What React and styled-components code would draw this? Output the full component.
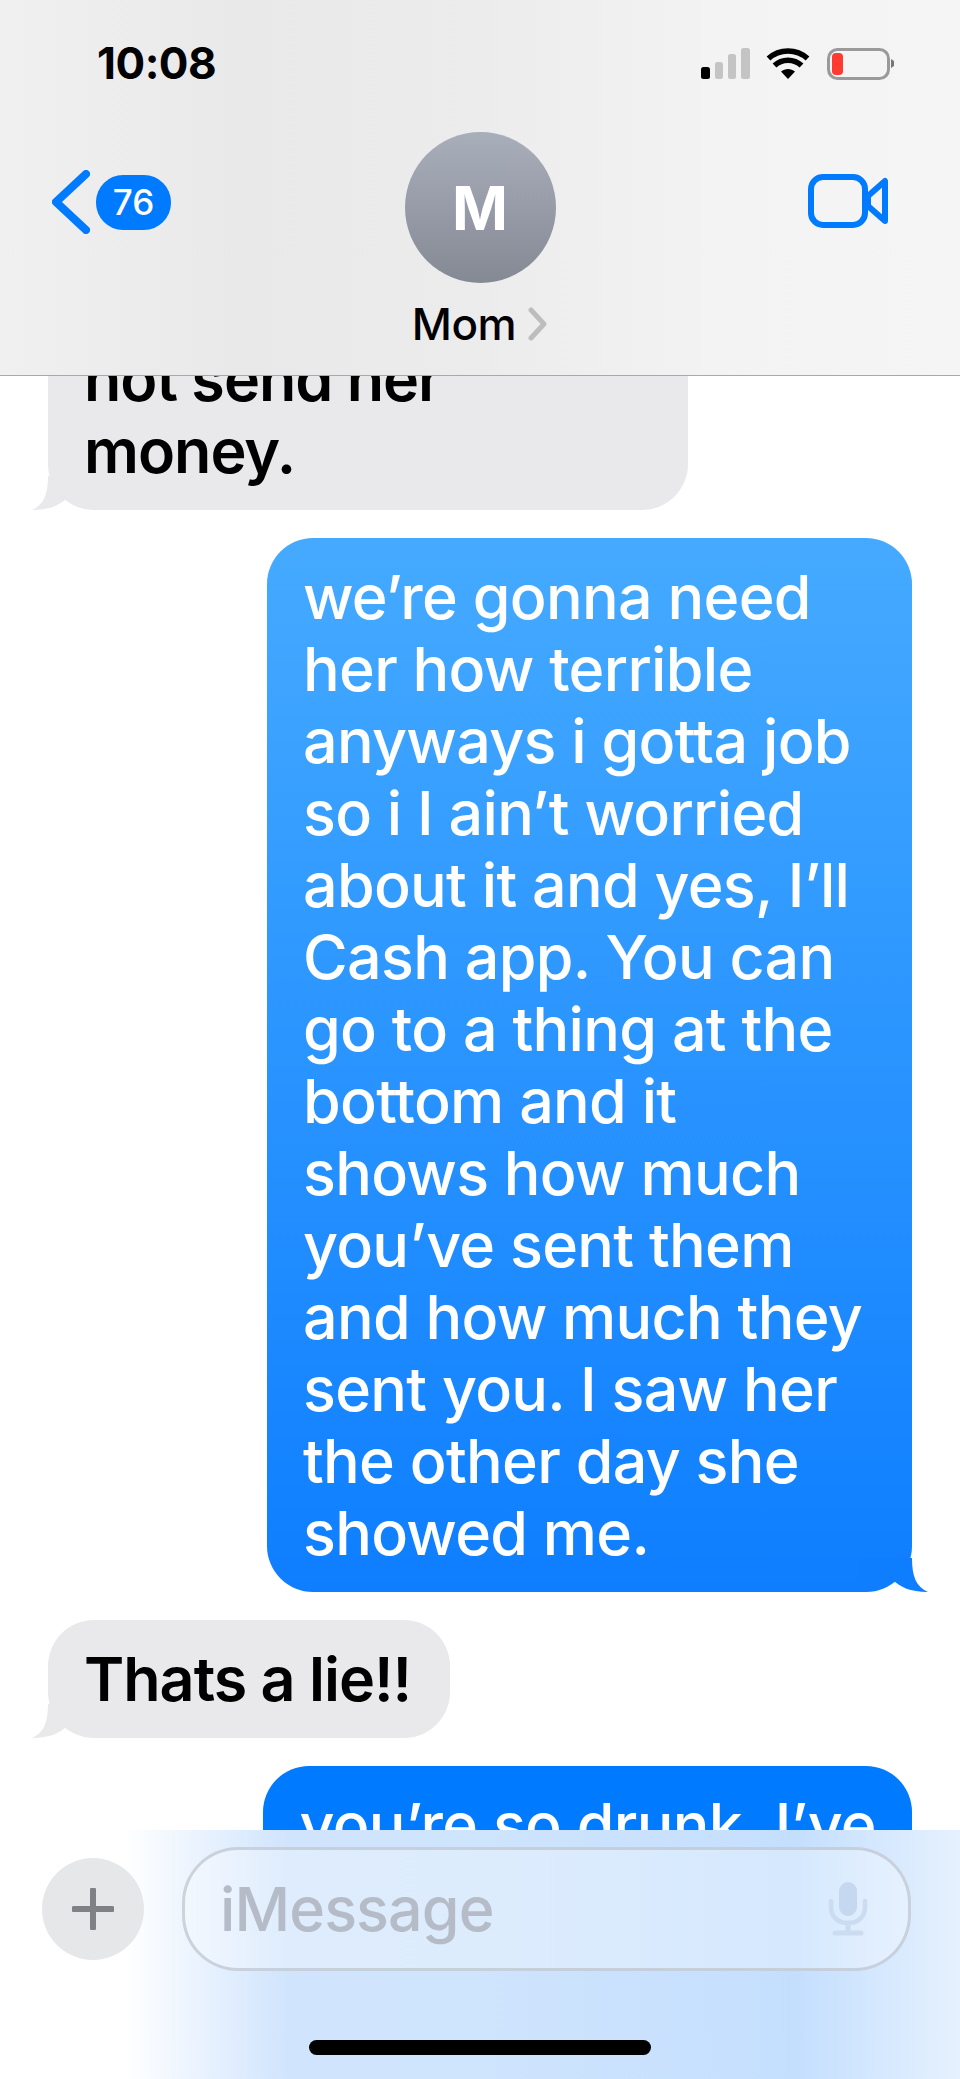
import React from 'react'
import styled, { createGlobalStyle } from 'styled-components'

const GlobalStyle = createGlobalStyle`
  html, body {
    margin: 0;
    padding: 0;
    background: #fff;
  }
  * {
    box-sizing: border-box;
  }
`

const Screen = styled.div`
  position: relative;
  width: 960px;
  height: 2079px;
  overflow: hidden;
  background: #fff;
  font-family: Inter, "Liberation Sans", sans-serif;
`

// Header
const Header = styled.header`
  position: absolute;
  top: 0;
  left: 0;
  right: 0;
  z-index: 2;
  height: 376px;
  padding: 0 52px;
  background: linear-gradient(90deg, #f0f0f0 0%, #e9e9e9 25%, #ececec 50%, #f3f3f3 75%, #f5f5f5 100%);
  border-bottom: 1px solid #a9a9a9;
`

const StatusBar = styled.div`
  display: flex;
  align-items: flex-start;
  justify-content: space-between;
  height: 132px;
  padding-top: 48px;
  padding-right: 12px;
`

const Time = styled.div`
  margin-left: 45px;
  font-size: 44px;
  line-height: 31px;
  font-weight: 700;
  letter-spacing: -0.5px;
  color: #000;
`

const StatusIcons = styled.svg`
  display: block;
`

const NavRow = styled.div`
  display: grid;
  grid-template-columns: 1fr auto 1fr;
  align-items: start;
`

const BackGroup = styled.div`
  display: flex;
  align-items: center;
  gap: 6px;
  padding-top: 38px;
`

const Badge = styled.div`
  width: 75px;
  height: 55px;
  display: flex;
  align-items: center;
  justify-content: center;
  border-radius: 27px;
  background: #007aff;
  color: #fff;
  font-size: 35px;
  font-weight: 500;
`

const Contact = styled.div`
  display: flex;
  flex-direction: column;
  align-items: center;
`

const Avatar = styled.div`
  width: 151px;
  height: 151px;
  display: flex;
  align-items: center;
  justify-content: center;
  border-radius: 50%;
  background: linear-gradient(180deg, #a9aebb 0%, #858994 100%);
  color: #fff;
  font-size: 60px;
  font-weight: 700;
`

const ContactName = styled.div`
  display: flex;
  align-items: center;
  gap: 12px;
  margin-top: 16px;
  font-size: 44px;
  line-height: 50px;
  font-weight: 500;
  letter-spacing: -0.4px;
  color: #000;
`

const VideoButton = styled.div`
  display: flex;
  justify-content: flex-end;
  padding: 42px 19px 0 0;
`

// Messages
const Thread = styled.main`
  display: flex;
  flex-direction: column;
  gap: 28px;
  padding: 320px 48px 0;
`

const Bubble = styled.div`
  position: relative;
  align-self: ${(p) => (p.$sent ? 'flex-end' : 'flex-start')};
  width: ${(p) => p.$width || 'fit-content'};
  padding: 23px 36px;
  border-radius: 46px;
  background: ${(p) => p.$fill};
  color: ${(p) => (p.$sent ? '#fff' : '#000')};
  font-size: 61px;
  line-height: 72px;
  font-weight: ${(p) => (p.$sent ? 500 : 600)};
  letter-spacing: ${(p) => (p.$sent ? '-0.7px' : '-1px')};
  white-space: nowrap;
`

const Line = styled.div``

const Tail = styled.svg`
  position: absolute;
  bottom: 0;
  ${(p) => (p.$sent ? 'right: -16px;' : 'left: -16px;')}
`

// Composer
const Composer = styled.footer`
  position: absolute;
  left: 0;
  right: 0;
  bottom: 0;
  z-index: 2;
  height: 249px;
  padding: 17px 49px 0 42px;
  background:
    linear-gradient(90deg, #fff 0%, #fff 13%, rgba(255, 255, 255, 0) 30%),
    linear-gradient(90deg, #d2e5fd 0%, #cfe4fd 50%, #c4dffe 83%, #e6f1fe 100%);
`

const ComposerRow = styled.div`
  display: flex;
  align-items: center;
  gap: 38px;
`

const PlusButton = styled.div`
  width: 102px;
  height: 102px;
  flex-shrink: 0;
  display: flex;
  align-items: center;
  justify-content: center;
  border-radius: 50%;
  background: #e6e7e9;
`

const InputField = styled.div`
  flex: 1;
  height: 124px;
  display: flex;
  align-items: center;
  justify-content: space-between;
  padding: 0 40px 0 35px;
  border-radius: 56px;
  border: 3px solid rgba(190, 197, 208, 0.75);
  background: rgba(255, 255, 255, 0.3);
`

const Placeholder = styled.div`
  font-size: 61px;
  font-weight: 500;
  letter-spacing: -0.9px;
  color: #b5bcc8;
`

const HomeBar = styled.div`
  width: 342px;
  height: 15px;
  margin: 69px auto 0 267px;
  border-radius: 8px;
  background: #000;
`

const Chevron = ({ width, height, path, color, stroke }) => (
  <svg width={width} height={height} viewBox={`0 0 ${width} ${height}`} fill="none">
    <path d={path} stroke={color} strokeWidth={stroke} strokeLinecap="round" strokeLinejoin="round" />
  </svg>
)

const ReceivedTail = () => (
  <Tail $sent={false} width="70" height="34" viewBox="0 0 70 34">
    <path d="M16 0 C16 18 12 29 0 34 C18 34 28 29 35 22 C42 29 54 34 70 34 L70 0 Z" fill="#e9e9eb" />
  </Tail>
)

const StatusGlyphs = () => (
  <StatusIcons width="195" height="33" viewBox="0 0 195 33">
    <rect x="0" y="19" width="9" height="12" rx="2.5" fill="#000" />
    <rect x="14" y="14" width="8" height="17" rx="2.5" fill="#c4c4c4" />
    <rect x="27" y="6" width="8" height="25" rx="2.5" fill="#c4c4c4" />
    <rect x="40" y="0" width="9" height="31" rx="2.5" fill="#c4c4c4" />
    <path d="M87 31 L80 23.5 C84 20 90 20 94 23.5 Z" fill="#000" />
    <path d="M73.5 17.5 C81 10.5 93 10.5 100.5 17.5" stroke="#000" strokeWidth="5.6" fill="none" />
    <path d="M67.5 10.5 C78.5 .5 95.5 .5 106.5 10.5" stroke="#000" strokeWidth="5.6" fill="none" />
    <rect x="127.5" y="1.5" width="60" height="29" rx="9" fill="none" stroke="#9a9a9a" strokeWidth="3" />
    <rect x="131" y="5" width="11" height="22" rx="4" fill="#ff3b30" />
    <path d="M190 11 L193 13 V18 L190 20 Z" fill="#777" />
  </StatusIcons>
)

const App = () => (
  <Screen>
    <GlobalStyle />
    <Header>
      <StatusBar>
        <Time>10:08</Time>
        <StatusGlyphs />
      </StatusBar>
      <NavRow>
        <BackGroup>
          <Chevron width="38" height="64" path="M34 4 L4 32 L34 60" color="#007aff" stroke="8" />
          <Badge>76</Badge>
        </BackGroup>
        <Contact>
          <Avatar>M</Avatar>
          <ContactName>
            Mom
            <Chevron width="20" height="34" path="M3 3 L16 17 L3 31" color="#bdbdbd" stroke="5" />
          </ContactName>
        </Contact>
        <VideoButton>
          <svg width="81" height="55" viewBox="0 0 81 55" fill="none">
            <rect x="3" y="3" width="54" height="48" rx="12" stroke="#007aff" strokeWidth="6" />
            <path d="M60 22 L77 7 V47 L60 32 Z" stroke="#007aff" strokeWidth="6" strokeLinejoin="round" />
          </svg>
        </VideoButton>
      </NavRow>
    </Header>

    <Thread>
      <Bubble $width="640px" $fill="#e9e9eb">
        <Line>not send her</Line>
        <Line>money.</Line>
        <ReceivedTail />
      </Bubble>

      <Bubble $sent $width="645px" $fill="linear-gradient(180deg, #45aaff 0%, #0e7eff 100%)">
        <Line>we’re gonna need</Line>
        <Line>her how terrible</Line>
        <Line>anyways i gotta job</Line>
        <Line>so i I ain’t worried</Line>
        <Line>about it and yes, I’ll</Line>
        <Line>Cash app. You can</Line>
        <Line>go to a thing at the</Line>
        <Line>bottom and it</Line>
        <Line>shows how much</Line>
        <Line>you’ve sent them</Line>
        <Line>and how much they</Line>
        <Line>sent you. I saw her</Line>
        <Line>the other day she</Line>
        <Line>showed me.</Line>
        <Tail $sent width="70" height="34" viewBox="0 0 70 34">
          <path d="M54 0 C54 18 58 29 70 34 C52 34 42 29 35 22 C28 29 16 34 0 34 L0 0 Z" fill="#0e7eff" />
        </Tail>
      </Bubble>

      <Bubble $width="402px" $fill="#e9e9eb">
        <Line>Thats a lie!!</Line>
        <ReceivedTail />
      </Bubble>

      <Bubble $sent $fill="#007aff">
        <Line>you’re so drunk. I’ve</Line>
      </Bubble>
    </Thread>

    <Composer>
      <ComposerRow>
        <PlusButton>
          <svg width="42" height="42" viewBox="0 0 42 42" fill="none">
            <path d="M21 2 V40 M2 21 H40" stroke="#808185" strokeWidth="6" strokeLinecap="round" />
          </svg>
        </PlusButton>
        <InputField>
          <Placeholder>iMessage</Placeholder>
          <svg width="40" height="54" viewBox="0 0 40 54" fill="none">
            <rect x="11" y="0" width="18" height="34" rx="9" fill="#c5d8ef" />
            <path d="M3 19 V25 C3 35 10 41 20 41 C30 41 37 35 37 25 V19" stroke="#cbdcf1" strokeWidth="4.5" strokeLinecap="round" />
            <path d="M20 41 V50 M7 51 H33" stroke="#cbdcf1" strokeWidth="5" strokeLinecap="round" />
          </svg>
        </InputField>
      </ComposerRow>
      <HomeBar />
    </Composer>
  </Screen>
)

export default App
